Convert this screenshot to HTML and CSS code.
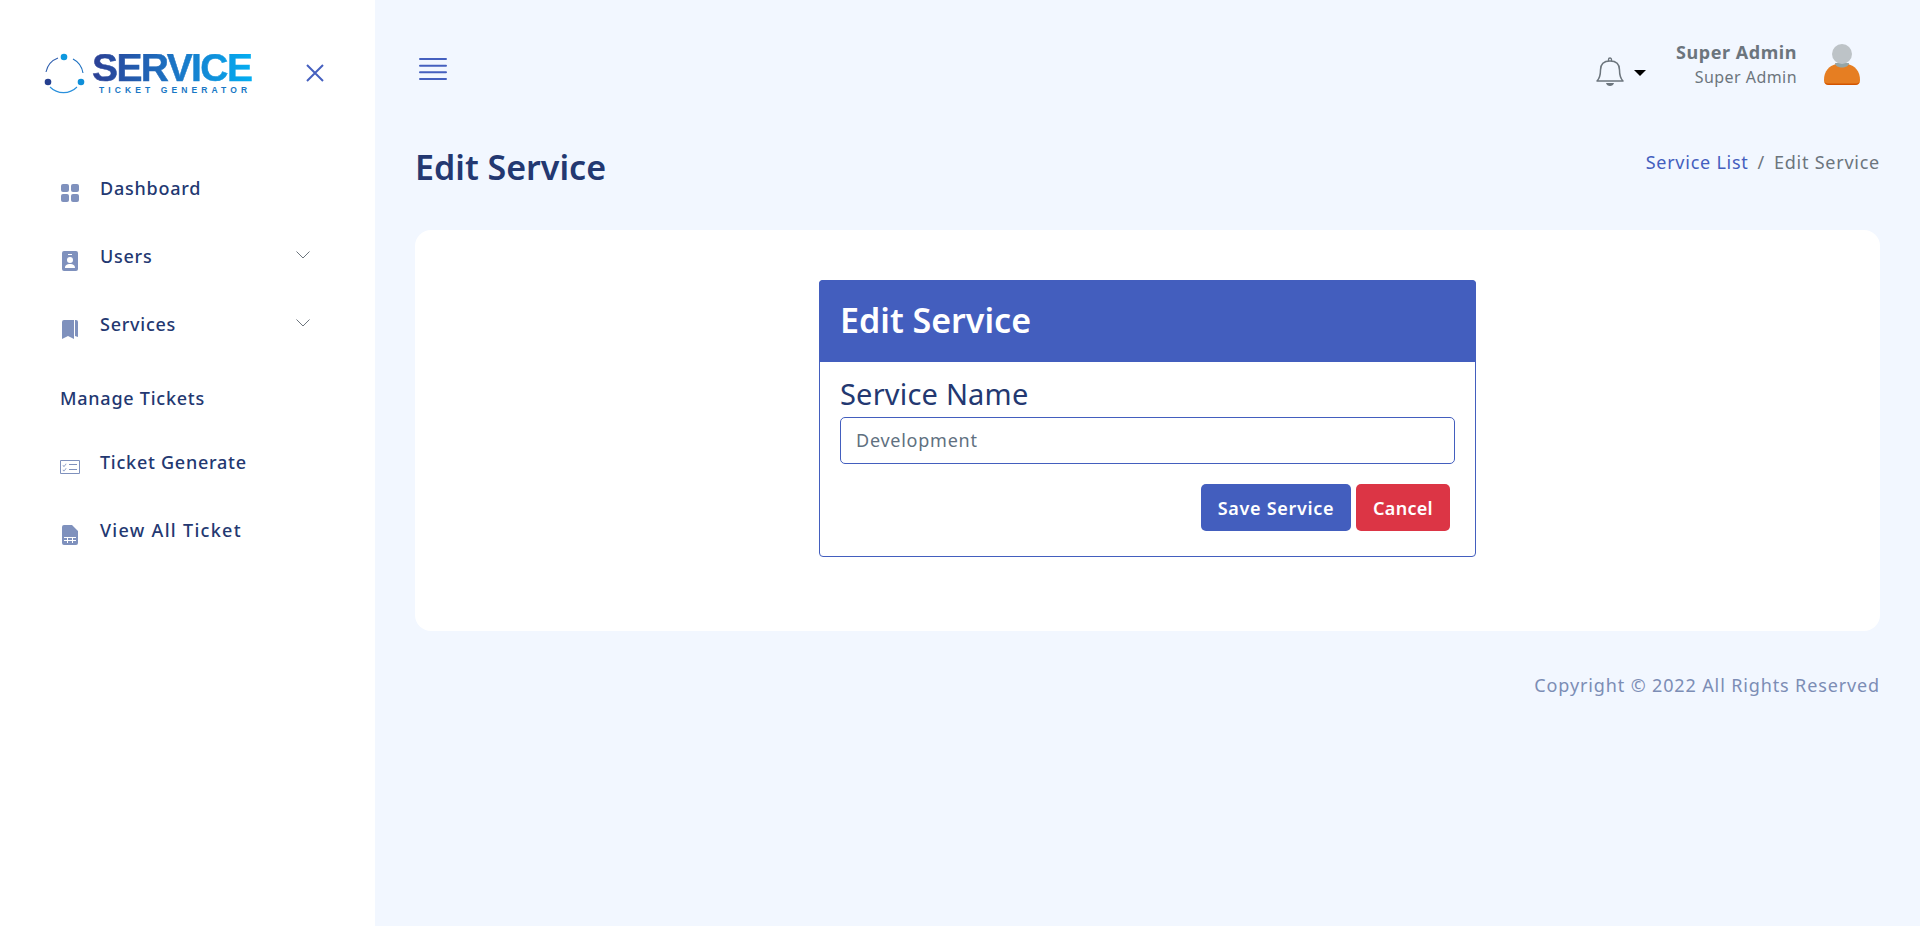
FILE: index.html
```html
<!DOCTYPE html>
<html lang="en">
<head>
<meta charset="utf-8">
<title>Edit Service</title>
<link rel="stylesheet" href="styles.css">
</head>
<body>
<div class="app">
  <aside class="sidebar">
    <div class="brand">
      <svg class="logo" width="44" height="56" viewBox="0 0 44 56">
        <path d="M2 26A19 19 0 0 1 14 12" fill="none" stroke="#2f5fae" stroke-width="1.100"/>
        <path d="M29 13A19 19 0 0 1 39 27" fill="none" stroke="#1b6fc0" stroke-width="1.100"/>
        <path d="M6 41A19 19 0 0 0 33 41" fill="none" stroke="#2a90dc" stroke-width="1.100"/>
        <circle cx="20" cy="11" r="3.300" fill="#0d98df"/>
        <circle cx="4" cy="36" r="3.300" fill="#253f8f"/>
        <circle cx="37" cy="36" r="3.300" fill="#0f8fd9"/>
      </svg>
      <div class="brand-text">
        <div class="logo-main">SERVICE</div>
        <div class="logo-sub">TICKET GENERATOR</div>
      </div>
      <svg class="close" width="18" height="18" viewBox="0 0 18 18"><path d="M1 1L17 17M17 1L1 17" stroke="#4560bf" stroke-width="2"/></svg>
    </div>
    <nav class="nav">
      <a class="nav-item">
        <svg class="ico" viewBox="0 0 20 20"><rect x="1" y="1" width="8" height="8" rx="2"/><rect x="11" y="1" width="8" height="8" rx="2"/><rect x="1" y="11" width="8" height="8" rx="2"/><rect x="11" y="11" width="8" height="8" rx="2"/></svg>
        <span class="nav-label">Dashboard</span>
      </a>
      <a class="nav-item">
        <svg class="ico" viewBox="0 0 20 20"><path fill-rule="evenodd" d="M4 0H16A2 2 0 0 1 18 2V18A2 2 0 0 1 16 20H4A2 2 0 0 1 2 18V2A2 2 0 0 1 4 0ZM8 3V4H12V3ZM10 6A3 3 0 1 0 10 12A3 3 0 1 0 10 6ZM5 17H15C15 14 13 13 10 13S5 14 5 17Z"/></svg>
        <span class="nav-label">Users</span>
        <svg class="chev" viewBox="0 0 14 8"><path d="M0.5 0.5L7 7L13.5 0.5" fill="none" stroke="#6c757d" stroke-width="1"/></svg>
      </a>
      <a class="nav-item">
        <svg class="ico" viewBox="0 0 20 20"><path d="M2 3A2 2 0 0 1 4 1H14V20L8 17L2 20Z"/><path d="M15 1H16A2 2 0 0 1 18 3V18L15 17Z"/></svg>
        <span class="nav-label">Services</span>
        <svg class="chev" viewBox="0 0 14 8"><path d="M0.5 0.5L7 7L13.5 0.5" fill="none" stroke="#6c757d" stroke-width="1"/></svg>
      </a>
      <div class="nav-title">Manage Tickets</div>
      <a class="nav-item">
        <svg class="ico" viewBox="0 0 20 20"><path fill-rule="evenodd" d="M1 3H19A1 1 0 0 1 20 4V16A1 1 0 0 1 19 17H1A1 1 0 0 1 0 16V4A1 1 0 0 1 1 3ZM1 4V16H19V4ZM9 7H17V8H9ZM9 12H17V13H9ZM3 8L4 9L6 6.500L6.500 7L4 10L2.500 8.500ZM3 12.500L4 13.500L6 11L6.500 11.500L4 14.500L2.500 13Z"/></svg>
        <span class="nav-label">Ticket Generate</span>
      </a>
      <a class="nav-item">
        <svg class="ico" viewBox="0 0 20 20"><path fill-rule="evenodd" d="M4 0H12L18 6V18A2 2 0 0 1 16 20H4A2 2 0 0 1 2 18V2A2 2 0 0 1 4 0ZM4 12V13H7V15H4V16H7V18H8V16H12V18H13V16H16V15H13V13H16V12ZM8 13H12V15H8Z"/></svg>
        <span class="nav-label nav-label-wide">View All Ticket</span>
      </a>
    </nav>
  </aside>
  <main class="main">
    <header class="topbar">
      <svg class="burger" width="28" height="25" viewBox="0 0 28 25"><path d="M1 2H27M1 8.700H27M1 15.300H27M1 22H27" stroke="#4560bf" stroke-width="2" stroke-linecap="round"/></svg>
      <div class="top-right">
        <svg class="bell" width="28" height="30" viewBox="0 0 28 30"><path d="M1 24C4 21 4.500 18 4.500 13C4.500 7 8 4 14 4S23.500 7 23.500 13C23.500 18 24 21 27 24Z" fill="none" stroke="#6c757d" stroke-width="1.500" stroke-linejoin="round"/><path d="M12.500 4V2.500A1.500 1.500 0 0 1 15.500 2.500V4" fill="none" stroke="#6c757d" stroke-width="1.300"/><path d="M10 26H18C17.500 28 16 29 14 29S10.500 28 10 26Z" fill="#6c757d"/></svg>
        <span class="caret"></span>
        <div class="user">
          <div class="user-name">Super Admin</div>
          <div class="user-role">Super Admin</div>
        </div>
        <svg class="avatar" width="36" height="42" viewBox="0 0 36 42"><path d="M0 36C0 27 5 22 12 20H24C31 22 36 27 36 36C36 40 34 41 31 41H5C2 41 0 40 0 36Z" fill="#e67e22"/><path d="M0.500 38C1 40 3 41 5 41H31C33 41 35 40 35.500 38C34 39 33 39.500 31 39.500H5C3 39.500 2 39 0.500 38Z" fill="#d35400"/><path d="M11 19C11 25 25 25 25 19Z" fill="#95a5a6"/><circle cx="18" cy="10" r="10" fill="#bdc3c7"/></svg>
      </div>
    </header>
    <div class="page-head">
      <h1 class="page-title">Edit Service</h1>
      <div class="crumbs"><a class="crumb-link">Service List</a><span class="crumb-sep">/</span><span>Edit Service</span></div>
    </div>
    <section class="card">
      <form class="form-box">
        <div class="form-head">Edit Service</div>
        <div class="form-body">
          <label class="form-label">Service Name</label>
          <div class="input">Development</div>
          <div class="actions">
            <button type="button" class="btn btn-save">Save Service</button>
            <button type="button" class="btn btn-cancel">Cancel</button>
          </div>
        </div>
      </form>
    </section>
    <footer class="footer">Copyright © 2022 All Rights Reserved</footer>
  </main>
</div>
</body>
</html>
```

FILE: styles.css
```css
* { box-sizing: border-box; }
html, body { margin: 0; height: 100%; }
body {
  font-family: "Noto Sans", "Open Sans", sans-serif;
  color: #233871;
  background: #f2f7ff;
  font-size: 18px;
  letter-spacing: 0.75px;
}
.app { display: flex; height: 926px; overflow: hidden; }
.sidebar { width: 375px; flex: none; background: #fff; padding: 46px 0 0 44px; }
.brand { display: flex; align-items: flex-start; height: 56px; }
.logo { flex: none; }
.brand-text { width: 164px; margin: 8px 0 0 4px; flex: none; font-family: "Liberation Sans", sans-serif; font-weight: 700; letter-spacing: 0; }
.logo-main {
  width: 160px;
  font-size: 39px;
  line-height: 28px;
  letter-spacing: -1.6px;
  white-space: nowrap;
  background: linear-gradient(90deg, #2b3f94, #1a78c8 55%, #03aef2);
  -webkit-background-clip: text;
  background-clip: text;
  color: transparent;
  -webkit-text-stroke: 0.5px transparent;
}
.logo-sub { margin: 3px 0 0 7px; font-size: 8.5px; line-height: 10px; letter-spacing: 4.1px; color: #1877c5; white-space: nowrap; }
.close { margin: 18px 0 0 50px; }
.nav { margin-top: 71px; padding-left: 16px; font-weight: 500; }
.nav-item { display: flex; align-items: flex-start; height: 68px; position: relative; }
.ico { width: 20px; height: 20px; fill: #7f91bd; flex: none; margin-top: 10px; }
.nav-label { margin-left: 20px; line-height: 30px; }
.nav-label-wide { letter-spacing: 1.3px; }
.chev { position: absolute; left: 236px; top: 10px; width: 14px; height: 8px; }
.nav-title { line-height: 30px; height: 70px; padding-top: 6px; }
.main { flex: 1; padding: 0 40px; min-width: 0; }
.topbar { display: flex; align-items: center; justify-content: space-between; height: 140px; }
.burger { margin: 0 0 2px 4px; }
.top-right { display: flex; align-items: center; margin: 0 20px 10px 0; }
.bell { margin-top: 14px; }
.caret { width: 0; height: 0; border: 6px solid transparent; border-top-color: #000; border-bottom: 0; margin: 16px 0 0 10px; }
.user { margin: 0 27px 0 30px; text-align: right; line-height: 25px; color: #6c757d; }
.user-name { font-weight: 700; letter-spacing: 0.55px; }
.user-role { font-size: 16px; letter-spacing: 0.45px; }
.page-head { display: flex; justify-content: space-between; align-items: flex-start; height: 90px; }
.page-title { margin: -1px 0 0; font-size: 34px; font-weight: 600; line-height: 56px; letter-spacing: 0; }
.crumbs { line-height: 30px; color: #6c757d; margin-top: 7px; }
.crumb-link { color: #435ebe; }
.crumb-sep { margin: 0 9px; }
.card { background: #fff; border-radius: 16px; height: 401px; padding-top: 50px; display: flex; justify-content: center; }
.form-box { width: 657px; height: 277px; border: 1px solid #435ebe; border-radius: 4px; background: #fff; }
.form-head { height: 82px; margin: -1px -1px 0; background: #435ebe; border-radius: 4px 4px 0 0; color: #fff; font-size: 34px; font-weight: 600; line-height: 80px; padding-left: 21px; letter-spacing: 0; }
.form-body { padding: 13px 20px 0; }
.form-label { display: block; font-size: 29px; line-height: 38px; letter-spacing: 0.2px; }
.input { height: 47px; border: 1px solid #435ebe; border-radius: 5px; padding: 0 15px; line-height: 44px; color: #607080; margin-top: 4px; }
.actions { display: flex; justify-content: flex-end; gap: 5px; margin-top: 20px; padding-right: 5px; }
.btn { height: 47px; border: 0; border-radius: 5px; color: #fff; font: 600 18px "Noto Sans", sans-serif; letter-spacing: 0.7px; padding: 0; }
.btn-save { background: #435ebe; width: 150px; }
.btn-cancel { background: #dc3545; width: 94px; letter-spacing: 0.3px; }
.footer { text-align: right; margin-top: 40px; line-height: 28px; color: #7c8db5; letter-spacing: 0.87px; }
```
